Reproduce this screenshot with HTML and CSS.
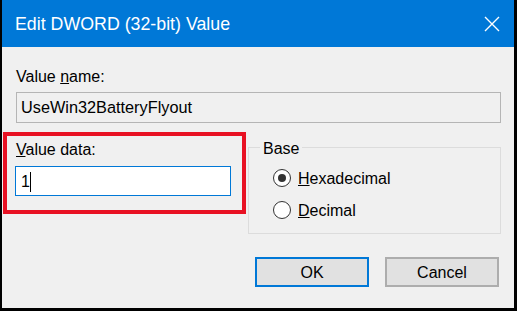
FILE: index.html
```html
<!DOCTYPE html>
<html lang="en">
<head>
    <meta charset="UTF-8">
    <title>Edit DWORD (32-bit) Value</title>
    <link rel="stylesheet" href="styles.css">
</head>
<body>
    <div class="dialog">
        <div class="title-bar">
            <span class="title">Edit DWORD (32-bit) Value</span>
            <svg class="close-icon" width="16" height="16" viewBox="0 0 16 16">
                <path d="M1 1 L15 15 M15 1 L1 15" stroke="#FFFFFF" stroke-width="1.4" fill="none"/>
            </svg>
        </div>
        <div class="content">
            <div class="label name-label">Value <u>n</u>ame:</div>
            <div class="name-box">UseWin32BatteryFlyout</div>

            <div class="row">
                <div class="data-section">
                    <div class="label"><u>V</u>alue data:</div>
                    <div class="data-box">1<span class="caret"></span></div>
                </div>
                <fieldset class="base-group">
                    <legend>Base</legend>
                    <div class="radio-row">
                        <span class="radio checked"></span>
                        <span class="radio-label"><u>H</u>exadecimal</span>
                    </div>
                    <div class="radio-row second">
                        <span class="radio"></span>
                        <span class="radio-label"><u>D</u>ecimal</span>
                    </div>
                </fieldset>
            </div>

            <div class="actions">
                <button class="btn ok-button">OK</button>
                <button class="btn cancel-button">Cancel</button>
            </div>
        </div>
    </div>
</body>
</html>
```

FILE: styles.css
```css
* {
    margin: 0;
    padding: 0;
    box-sizing: border-box;
    font-family: "Liberation Sans", Arial, sans-serif;
}

body {
    background-color: #000000;
    width: 517px;
    height: 311px;
    overflow: hidden;
}

.dialog {
    width: 517px;
    height: 311px;
    background-color: #F0F0F0;
    border-left: 2px solid #000000;
    border-right: 3px solid #000000;
    border-bottom: 3px solid #000000;
    display: flex;
    flex-direction: column;
}

.title-bar {
    height: 47px;
    background-color: #0078D7;
    color: #FFFFFF;
    display: flex;
    justify-content: space-between;
    align-items: center;
    padding: 2px 14px 0 13px;
}

.title {
    font-size: 17.8px;
    line-height: 45px;
}

.close-icon {
    margin-top: -2px;
}

.content {
    padding: 0 13px 0 14px;
    color: #000000;
    font-size: 16px;
}

.label {
    font-size: 16px;
    line-height: 20px;
}

.name-label {
    margin-top: 20px;
}

.name-box {
    margin-top: 5px;
    height: 31px;
    border: 1px solid #B5B5B5;
    background-color: #F0F0F0;
    padding-left: 4px;
    line-height: 29px;
    font-size: 16.3px;
}

.row {
    display: flex;
    margin-top: 9px;
    height: 102px;
}

.data-section {
    margin-left: -13px;
    width: 243px;
    height: 82px;
    border: 4px solid #E81123;
    padding: 4px 11px 0 9px;
}

.data-box {
    margin-top: 6px;
    margin-left: -1px;
    height: 30px;
    border: 1px solid #0078D7;
    background-color: #FFFFFF;
    padding: 1px 0 0 5px;
    line-height: 27px;
}

.caret {
    display: inline-block;
    width: 1.5px;
    height: 20px;
    background-color: #000000;
    vertical-align: -5px;
}

.base-group {
    flex: 1;
    margin: 3px 0 0 2px;
    padding: 10px 0 11px 11px;
    border: 1px solid #DCDCDC;
    min-width: 0;
    height: 99px;
}

.base-group legend {
    padding: 4px 3px 0 3px;
    line-height: 20px;
}

.radio-row {
    display: flex;
    align-items: flex-start;
    height: 20px;
}

.radio-row.second {
    margin-top: 12px;
}

.radio {
    width: 18px;
    height: 18px;
    margin-left: 13px;
    border: 1px solid #333333;
    border-radius: 50%;
    background-color: #FFFFFF;
    display: flex;
    justify-content: center;
    align-items: center;
}

.radio.checked::after {
    content: "";
    width: 8px;
    height: 8px;
    border-radius: 50%;
    background-color: #333333;
}

.radio-label {
    margin-left: 7px;
    line-height: 20px;
}

.actions {
    display: flex;
    justify-content: flex-end;
    gap: 16px;
    margin-top: 23px;
    padding-right: 2px;
}

.btn {
    width: 114px;
    height: 30px;
    background-color: #E1E1E1;
    font-size: 16px;
    padding-top: 2px;
    color: #000000;
}

.ok-button {
    border: 2px solid #0078D7;
}

.cancel-button {
    border: 2px solid #ADADAD;
}
```
